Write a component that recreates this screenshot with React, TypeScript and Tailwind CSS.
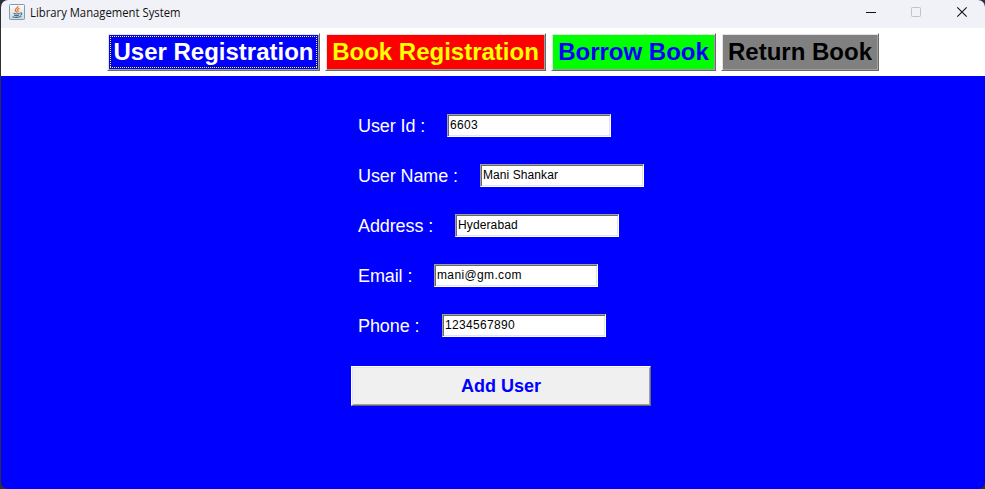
import React from "react";

type Tab = { label: string; className: string; focused?: boolean };

const tabs: Tab[] = [
  { label: "User Registration", className: "w-[213px] bg-[#0000ff] text-white", focused: true },
  { label: "Book Registration", className: "w-[221px] bg-[#ff0000] text-[#ffff00]" },
  { label: "Borrow Book", className: "w-[165px] bg-[#00ff00] text-[#0000ff]" },
  { label: "Return Book", className: "w-[158px] bg-[#808080] text-black" },
];

const fields = [
  { label: "User Id :", value: "6603", width: "w-[89px]", tracking: "tracking-[0.33px]" },
  { label: "User Name :", value: "Mani Shankar", width: "w-[122px]", tracking: "tracking-[0.08px]" },
  { label: "Address :", value: "Hyderabad", width: "w-[97px]", tracking: "tracking-[0.12px]" },
  { label: "Email :", value: "mani@gm.com", width: "w-[76px]", tracking: "tracking-[0.36px]" },
  { label: "Phone :", value: "1234567890", width: "w-[84px]", tracking: "tracking-[0.33px]" },
];

const raised =
  "border border-t-white border-l-white border-r-[#696969] border-b-[#696969] shadow-[inset_1px_1px_0_#e3e3e3,inset_-1px_-1px_0_#a0a0a0]";

function JavaIcon() {
  return (
    <svg width="16" height="16" viewBox="0 0 16 16" fill="none">
      <defs>
        <linearGradient id="cup-bg" x1="0" y1="0" x2="0" y2="1">
          <stop offset="0" stopColor="#fafbfc" />
          <stop offset="1" stopColor="#cfd8df" />
        </linearGradient>
      </defs>
      <rect x="0.5" y="0.5" width="15" height="15" rx="0.8" fill="url(#cup-bg)" stroke="#7f9bb0" />
      <path d="M8.900 2C9.500 4 5.700 4.600 6.400 6.400c.3.800 1 1.200 1.100 2.100" stroke="#e8791e" strokeWidth="1.400" />
      <path d="M10.600 4.300C8.600 5 8.200 5.800 9 6.700c.4.600.1 1.200-.5 1.700" stroke="#e8791e" strokeWidth="1.200" />
      <path d="M4.500 9.300c1.500.7 4.600.7 6.200 0M5 11c1.300.6 3.900.6 5.200 0M3.300 12.700c2.200 1 6.800.9 9-.1M11.200 9c2.300-.5 2 1.800-.1 2.300" stroke="#426d91" strokeWidth="1.100" />
    </svg>
  );
}

export default function App() {
  return (
    <div className="h-[489px] w-[985px] overflow-hidden bg-[#30302e] pl-px font-['Liberation_Sans',Arial,sans-serif]">
      <div className="flex h-full flex-col overflow-hidden rounded-[7px] bg-[#0000ff]">
        <header className="flex h-7 shrink-0 items-center bg-[#f1f2f8] pl-2">
          <div className="-mt-1">
            <JavaIcon />
          </div>
          <svg className="ml-[5px] h-7 w-[160px]" viewBox="0 0 160 28">
            <text x="0" y="17" textLength="150.500" lengthAdjust="spacingAndGlyphs" fill="#111111" fontSize="12" fontFamily="'Open Sans', 'Noto Sans', sans-serif">
              Library Management System
            </text>
          </svg>
          <svg className="ml-auto h-7 w-[120px]" viewBox="865 0 120 28" fill="none">
            <path d="M866 12.500h10" stroke="#111" />
            <rect x="911.500" y="7.500" width="9" height="9" rx="0.8" stroke="#c1c3c9" />
            <path d="M957.300 7.300l9.400 9.400m0-9.400l-9.400 9.400" stroke="#111" strokeWidth="1.100" />
          </svg>
        </header>
        <nav className="flex h-12 shrink-0 gap-[5px] bg-white pt-[5px] pl-[106px]">
          {tabs.map((tab) => (
            <button
              key={tab.label}
              className={`relative flex h-[38px] items-center justify-center text-2xl leading-none font-bold whitespace-nowrap ${raised} ${tab.className}`}
            >
              <span className="-mt-px">{tab.label}</span>
              {tab.focused && (
                <svg className="absolute top-[2px] left-[2px] h-[32px] w-[207px]" viewBox="0 0 207 32" fill="none">
                  <path d="M0 0.500H207M0 31.500H207M0.500 2V31M206.500 2V31" stroke="#ffff00" strokeDasharray="1 1" shapeRendering="crispEdges" />
                </svg>
              )}
            </button>
          ))}
        </nav>
        <main className="flex flex-col pt-[38px] pl-[357px]">
          <div className="flex flex-col gap-[27px]">
            {fields.map((field) => (
              <div key={field.label} className="flex h-[23px] items-center">
                <label className={`shrink-0 pt-px text-[18px] leading-[22px] tracking-[-0.1px] whitespace-nowrap text-white ${field.width}`}>
                  {field.label}
                </label>
                <input
                  defaultValue={field.value}
                  className={`h-[23px] w-[164px] border border-t-[#a0a0a0] border-r-white border-b-white border-l-[#a0a0a0] bg-white pb-px pl-[2px] text-[12px] leading-[14px] text-black shadow-[inset_1px_1px_0_#696969,inset_-1px_-1px_0_#e3e3e3] outline-none ${field.tracking}`}
                />
              </div>
            ))}
          </div>
          <button className={`mt-[29px] -ml-[7px] h-10 w-[300px] bg-[#f0f0f0] text-[18px] leading-none font-bold text-[#0000ff] ${raised}`}>
            Add User
          </button>
        </main>
      </div>
    </div>
  );
}
